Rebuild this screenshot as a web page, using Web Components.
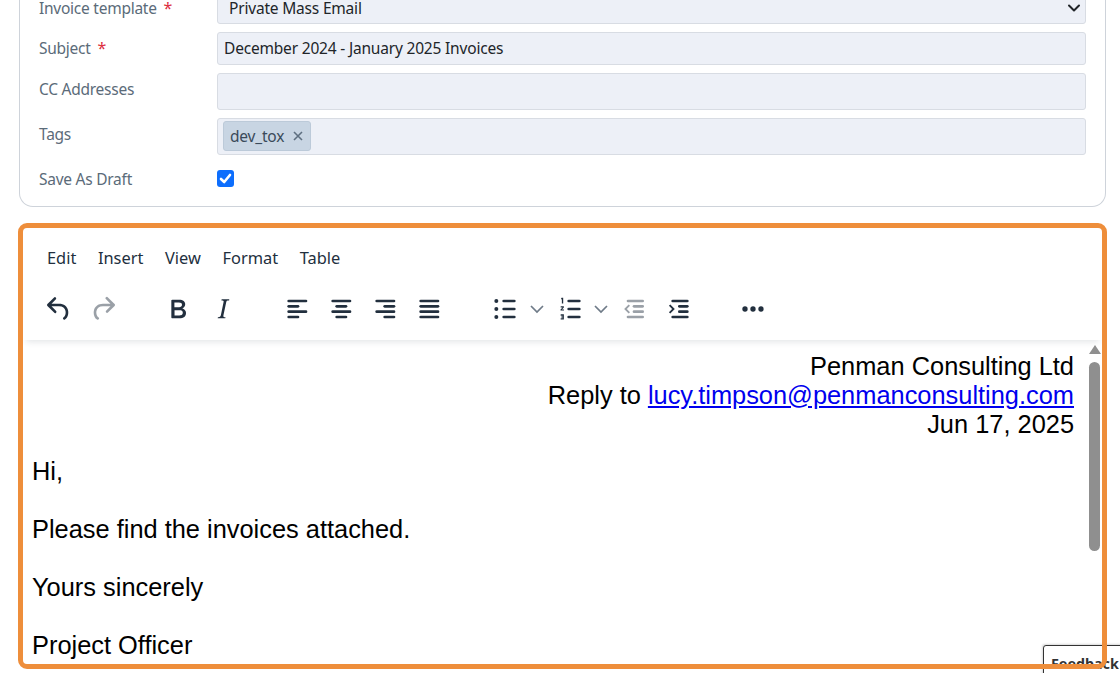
<!DOCTYPE html>
<html lang="en">
<head>
<meta charset="utf-8">
<title>Invoice email</title>
<style>
  html, body { margin: 0; height: 100%; overflow: hidden; background: #fff; }
  body { font-family: "Noto Sans", "Open Sans", sans-serif; }
</style>
</head>
<body>
<invoice-page>
  <form-card>
    <form-row label="Invoice template" required>
      <select-field>Private Mass Email</select-field>
    </form-row>
    <form-row label="Subject" required>
      <text-field>December 2024 - January 2025 Invoices</text-field>
    </form-row>
    <form-row label="CC Addresses">
      <text-field tall></text-field>
    </form-row>
    <form-row label="Tags">
      <text-field tall chips><tag-chip>dev_tox</tag-chip></text-field>
    </form-row>
    <form-row label="Save As Draft">
      <check-box></check-box>
    </form-row>
  </form-card>
  <rich-editor>
    <letter-head>
      <div>Penman Consulting Ltd</div>
      <div>Reply to <a href="#">lucy.timpson@penmanconsulting.com</a></div>
      <div>Jun 17, 2025</div>
    </letter-head>
    <letter-para>Hi,</letter-para>
    <letter-para>Please find the invoices attached.</letter-para>
    <letter-para>Yours sincerely</letter-para>
    <letter-para>Project Officer</letter-para>
  </rich-editor>
  <feedback-tab>Feedback</feedback-tab>
</invoice-page>

<script>
const lines = (rows) => rows.map(([x, y, w]) => `<rect x="${x}" y="${y}" width="${w}" height="2" rx="1"/>`).join('');

const ICONS = {
  undo: '<path d="M6.4 8H12c3.7 0 6.2 2 6.8 5.1.6 2.7-.4 5.6-2.3 6.8a1 1 0 0 1-1-1.8c1.1-.6 1.8-2.7 1.4-4.6-.5-2.1-2.1-3.5-4.9-3.5H6.4l3.3 3.3a1 1 0 1 1-1.4 1.4l-5-5a1 1 0 0 1 0-1.4l5-5a1 1 0 0 1 1.4 1.4L6.4 8Z"/>',
  redo: '<path d="M17.6 10H12c-2.8 0-4.4 1.4-4.9 3.5-.4 2 .3 4 1.4 4.6a1 1 0 1 1-1 1.8c-2-1.2-2.9-4.1-2.3-6.8.6-3 3-5.1 6.8-5.1h5.6l-3.3-3.3a1 1 0 1 1 1.4-1.4l5 5a1 1 0 0 1 0 1.4l-5 5a1 1 0 0 1-1.4-1.4l3.3-3.3Z"/>',
  bold: '<path d="M7.8 19c-.3 0-.5 0-.6-.2l-.2-.5V5.7c0-.2 0-.4.2-.5l.6-.2h5c1.5 0 2.7.3 3.5 1 .7.6 1.1 1.4 1.1 2.5a3 3 0 0 1-.6 1.9c-.4.6-1 1-1.6 1.2.4.1.9.3 1.3.6s.8.7 1 1.2c.4.4.5 1 .5 1.6 0 1.3-.4 2.3-1.3 3-.8.7-2.1 1-3.8 1H7.8Zm5-8.3c.6 0 1.2-.1 1.6-.5.4-.3.6-.7.6-1.3 0-1.1-.8-1.7-2.3-1.7H9.3v3.5h3.4Zm.5 6c.7 0 1.3-.1 1.7-.4.4-.4.6-.9.6-1.5s-.2-1-.7-1.4c-.4-.3-1-.4-2-.4H9.4v3.8h4Z"/>',
  italic: '<path d="M16.7 4.7l-.1.9h-.3c-.6 0-1 0-1.4.3-.3.3-.4.6-.5 1.1l-2.1 9.8v.6c0 .5.4.8 1.4.8h.2l-.2.8H8l.2-.8h.2c1.1 0 1.8-.5 2-1.5l2-9.8.1-.5c0-.6-.4-.8-1.4-.8h-.3l.2-.9h5.8Z"/>',
  left: lines([[4, 5, 15], [4, 9, 9], [4, 13, 15], [4, 17, 9]]),
  center: lines([[4, 5, 15], [7, 9, 9], [4, 13, 15], [7, 17, 9]]),
  right: lines([[4, 5, 15], [10, 9, 9], [4, 13, 15], [10, 17, 9]]),
  justify: lines([[4, 5, 15], [4, 9, 15], [4, 13, 15], [4, 17, 15]]),
  bullets: lines([[10, 5, 10], [10, 11, 10], [10, 17, 10]]) +
    '<circle cx="5.5" cy="6" r="1.5"/><circle cx="5.5" cy="12" r="1.5"/><circle cx="5.5" cy="18" r="1.5"/>',
  numbers: lines([[10, 5, 10], [10, 11, 10], [10, 17, 10]]) +
    '<path d="M5.6 3.6h1.3v4.2H5.9V4.6h-.7ZM5 10h2.4v.9L6 12.3h1.5v.9H4.9v-.8l1.5-1.6H5ZM5 16h2.4v3.9H5V19h1.4v-.6h-1v-.8h1V17H5Z"/>',
  outdent: lines([[6.5, 5, 13], [11, 9, 8.5], [11, 13, 8.5], [6.5, 17, 13]]) +
    '<path d="M9 9.5 6.6 12 9 14.5 8 15.4 4.6 12 8 8.6Z"/>',
  indent: lines([[7, 5, 13], [12, 9, 8], [12, 13, 8], [7, 17, 13]]) +
    '<path d="M5.2 9.5 7.6 12 5.2 14.5 6.2 15.4 9.6 12 6.2 8.6Z"/>',
  more: '<circle cx="6" cy="12" r="2"/><circle cx="12" cy="12" r="2"/><circle cx="18" cy="12" r="2"/>'
};

class InvoicePage extends HTMLElement {
  constructor() {
    super();
    this.attachShadow({ mode: 'open' }).innerHTML = `
      <style>
        :host { display: block; height: 673px; overflow: hidden; position: relative; padding: 0 14px 0 19px; box-sizing: border-box; }
      </style>
      <slot></slot>`;
  }
}

class FormCard extends HTMLElement {
  constructor() {
    super();
    this.attachShadow({ mode: 'open' }).innerHTML = `
      <style>
        :host {
          display: flex; flex-direction: column; gap: 8px;
          margin-top: -40px; padding: 32px 19px 15px 19px;
          border: 1.5px solid #ced3da; border-top: 0; border-radius: 14px;
          box-sizing: border-box; height: 247px;
        }
      </style>
      <slot></slot>`;
  }
}

class FormRow extends HTMLElement {
  constructor() {
    super();
    const star = this.hasAttribute('required') ? '<span class="star">*</span>' : '';
    this.attachShadow({ mode: 'open' }).innerHTML = `
      <style>
        :host { display: grid; grid-template-columns: 178px 1fr; align-items: start; }
        .label { padding-top: 4px; font-size: 15.5px; letter-spacing: -.25px; line-height: 24px; color: #5b6b79; white-space: nowrap; }
        .star { color: #dc2f3f; margin-left: 3px; font-size: 16px; }
      </style>
      <div class="label">${this.getAttribute('label')} ${star}</div>
      <slot></slot>`;
  }
}

class TextField extends HTMLElement {
  constructor() {
    super();
    this.attachShadow({ mode: 'open' }).innerHTML = `
      <style>
        :host {
          display: flex; align-items: center; box-sizing: border-box;
          height: 33px; padding: 0 6px 2px; border: 1px solid #d8dce3; border-radius: 3px;
          background: #edf0f7; color: #212529; font-size: 15.5px; letter-spacing: -.19px;
        }
        :host([tall]) { height: 37px; }
        :host([chips]) { padding: 0 5px 2px; }
      </style>
      <slot></slot>`;
  }
}

class SelectField extends HTMLElement {
  constructor() {
    super();
    this.attachShadow({ mode: 'open' }).innerHTML = `
      <style>
        :host {
          display: flex; align-items: center; justify-content: space-between; box-sizing: border-box;
          height: 32px; padding: 0 3px 0 11px; border: 1px solid #d8dce3; border-radius: 3px;
          background: #edf0f7; color: #212529; font-size: 15.5px; letter-spacing: -.19px;
        }
        svg { width: 16px; height: 16px; fill: none; stroke: #212529; stroke-width: 2; stroke-linecap: round; stroke-linejoin: round; }
      </style>
      <span><slot></slot></span>
      <svg viewBox="0 0 16 16"><path d="M3 5.5 8 10.5 13 5.5"/></svg>`;
  }
}

class TagChip extends HTMLElement {
  constructor() {
    super();
    this.attachShadow({ mode: 'open' }).innerHTML = `
      <style>
        :host {
          display: inline-flex; align-items: center; gap: 9px; box-sizing: border-box;
          height: 30px; padding: 0 7px 0 6px; border-radius: 3px;
          background: #c8d5e3; border: 1px solid #bccad9; color: #3a4a5a; font-size: 15.5px;
        }
        svg { width: 10px; height: 10px; stroke: #5e6f80; stroke-width: 1.6; fill: none; }
      </style>
      <slot></slot>
      <svg viewBox="0 0 10 10"><path d="M1 1 9 9M9 1 1 9"/></svg>`;
  }
}

class CheckBox extends HTMLElement {
  constructor() {
    super();
    this.attachShadow({ mode: 'open' }).innerHTML = `
      <style>
        :host {
          display: flex; align-items: center; justify-content: center; box-sizing: border-box;
          width: 17px; height: 17px; margin-top: 7px; border-radius: 3px; background: #0d6efd;
        }
        svg { width: 13px; height: 13px; fill: none; stroke: #fff; stroke-width: 2.6; stroke-linecap: round; stroke-linejoin: round; }
      </style>
      <svg viewBox="0 0 13 13"><path d="M2 7 5.2 10 11 3"/></svg>`;
  }
}

class ToolIcon extends HTMLElement {
  constructor() {
    super();
    this.attachShadow({ mode: 'open' }).innerHTML = `
      <style>
        :host { display: flex; align-items: center; justify-content: center; width: 44.3px; height: 44px; flex: none; }
        :host([chevron]) { width: 20px; }
        svg { width: 32px; height: 32px; fill: #222f3e; flex: none; }
        :host([disabled]) svg { opacity: .45; }
        :host([chevron]) svg { width: 14px; height: 14px; margin-left: -1px; fill: none; stroke: #6f7b88; stroke-width: 1.7; }
      </style>
      ${this.hasAttribute('chevron')
        ? '<svg viewBox="0 0 14 14"><path d="M1 4 7 10 13 4"/></svg>'
        : `<svg viewBox="0 0 24 24">${ICONS[this.getAttribute('name')]}</svg>`}`;
  }
}

class RichEditor extends HTMLElement {
  constructor() {
    super();
    this.attachShadow({ mode: 'open' }).innerHTML = `
      <style>
        :host {
          display: flex; flex-direction: column; position: relative; box-sizing: border-box;
          margin: 16px -1px 0 -1px; height: 446px; padding: 5px 5px 0 5px; background: #fff;
        }
        .frame {
          position: absolute; inset: 0; box-sizing: border-box; z-index: 5; pointer-events: none;
          border: 5px solid #ee8e3b; border-radius: 9px;
        }
        .menu { display: flex; gap: 21.6px; height: 51px; align-items: center; padding: 8px 0 0 24px; box-sizing: border-box; font-size: 16.4px; color: #222f3e; flex: none; }
        .tools { display: flex; align-items: center; gap: 30.7px; height: 61px; padding: 0 0 1px 13.8px; box-sizing: border-box; box-shadow: 0 5px 6px -3px rgba(34,47,62,.12); position: relative; z-index: 1; flex: none; }
        .group { display: flex; align-items: center; }
        .body { flex: 1; display: flex; min-height: 0; overflow: hidden; color: #000; font-family: "Liberation Sans", Arial, sans-serif; font-size: 25.4px; line-height: 28.8px; }
        .content { flex: 1; min-width: 0; padding: 12px 14px 0 9px; }
        .bar { width: 13px; display: flex; flex-direction: column; align-items: center; padding-top: 5px; margin-right: 1px; flex: none; }
        .arrow { width: 0; height: 0; border-left: 6.5px solid transparent; border-right: 6.5px solid transparent; border-bottom: 9px solid #8f8f8f; }
        .thumb { width: 11px; height: 189px; margin-top: 8px; border-radius: 6px; background: #8f8f8f; }
      </style>
      <div class="menu"><span>Edit</span><span>Insert</span><span>View</span><span>Format</span><span>Table</span></div>
      <div class="tools">
        <div class="group"><tool-icon name="undo"></tool-icon><tool-icon name="redo" disabled></tool-icon></div>
        <div class="group"><tool-icon name="bold"></tool-icon><tool-icon name="italic"></tool-icon></div>
        <div class="group"><tool-icon name="left"></tool-icon><tool-icon name="center"></tool-icon><tool-icon name="right"></tool-icon><tool-icon name="justify"></tool-icon></div>
        <div class="group">
          <tool-icon name="bullets"></tool-icon><tool-icon chevron></tool-icon>
          <tool-icon name="numbers"></tool-icon><tool-icon chevron></tool-icon>
          <tool-icon name="outdent" disabled></tool-icon><tool-icon name="indent"></tool-icon>
        </div>
        <div class="group"><tool-icon name="more"></tool-icon></div>
      </div>
      <div class="body">
        <div class="content"><slot></slot></div>
        <div class="bar"><div class="arrow"></div><div class="thumb"></div></div>
      </div>
      <div class="frame"></div>`;
  }
}

class LetterHead extends HTMLElement {
  constructor() {
    super();
    this.attachShadow({ mode: 'open' }).innerHTML = `
      <style>
        :host { display: block; text-align: right; margin-bottom: 19px; }
        ::slotted(div) { white-space: nowrap; }
      </style>
      <slot></slot>`;
  }
}

class LetterPara extends HTMLElement {
  constructor() {
    super();
    this.attachShadow({ mode: 'open' }).innerHTML = `
      <style>:host { display: block; margin-bottom: 29.2px; white-space: nowrap; }</style>
      <slot></slot>`;
  }
}

class FeedbackTab extends HTMLElement {
  constructor() {
    super();
    this.attachShadow({ mode: 'open' }).innerHTML = `
      <style>
        :host {
          position: absolute; left: 1043px; top: 645px; width: 90px; height: 40px; box-sizing: border-box; z-index: 2;
          padding: 8px 0 0 7px; background: #fff; border: 1px solid #333; border-radius: 3px;
          box-shadow: -1px -1px 2px rgba(0,0,0,.15);
          font-size: 14.3px; font-weight: 700; line-height: 20px; color: #333; white-space: nowrap;
        }
      </style>
      <slot></slot>`;
  }
}

customElements.define('invoice-page', InvoicePage);
customElements.define('form-card', FormCard);
customElements.define('form-row', FormRow);
customElements.define('text-field', TextField);
customElements.define('select-field', SelectField);
customElements.define('tag-chip', TagChip);
customElements.define('check-box', CheckBox);
customElements.define('tool-icon', ToolIcon);
customElements.define('rich-editor', RichEditor);
customElements.define('letter-head', LetterHead);
customElements.define('letter-para', LetterPara);
customElements.define('feedback-tab', FeedbackTab);
</script>
</body>
</html>
